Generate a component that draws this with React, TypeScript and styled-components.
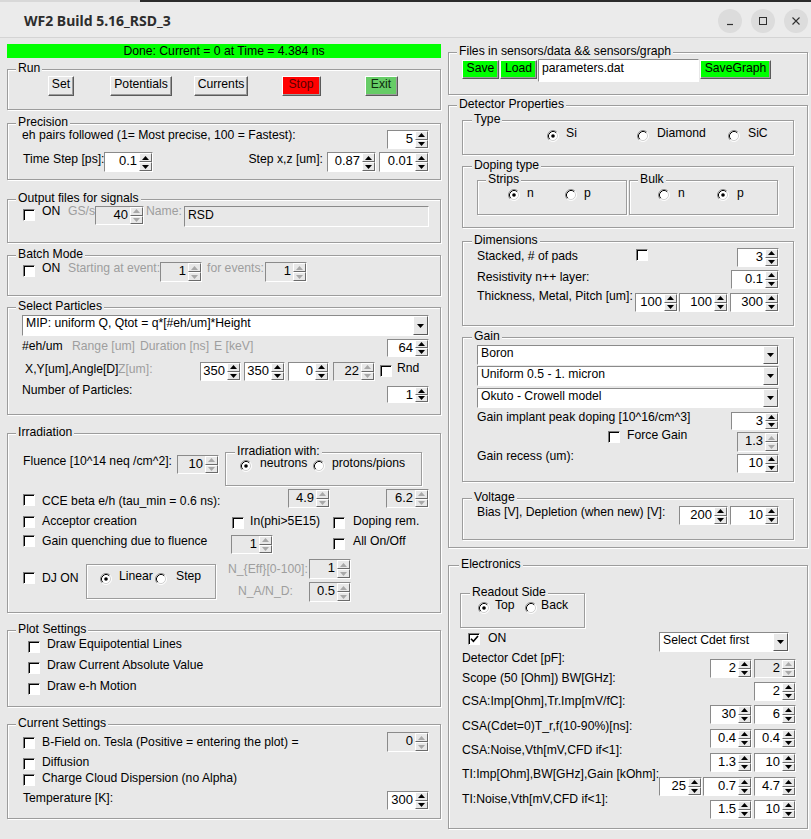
import React from 'react';
import styled, { createGlobalStyle } from 'styled-components';

const GlobalStyle = createGlobalStyle`
  html, body {
    margin: 0;
    padding: 0;
    background: #e8e8e8;
  }
`;

type Off = number | 'auto' | undefined;
const px = (v: Off) => (v === 'auto' ? 'auto' : `${v ?? 0}px`);

const App = () => {
  return (
    <>
      <GlobalStyle />
      <Window>
        <TitleBar>
          <WinTitle>WF2 Build 5.16_RSD_3</WinTitle>
          <WinControls>
            <WinBtn>
              <svg width="10" height="10" viewBox="0 0 10 10">
                <path d="M2 8.5H8" stroke="#2f2f2f" strokeWidth="1.2" />
              </svg>
            </WinBtn>
            <WinBtn>
              <svg width="10" height="10" viewBox="0 0 10 10">
                <rect x="1.5" y="1.5" width="7" height="7" fill="none" stroke="#2f2f2f" />
              </svg>
            </WinBtn>
            <WinBtn>
              <svg width="10" height="10" viewBox="0 0 10 10">
                <path d="M1.5 1.5L8.5 8.5M8.5 1.5L1.5 8.5" stroke="#2f2f2f" strokeWidth="1.1" />
              </svg>
            </WinBtn>
          </WinControls>
        </TitleBar>

        <Body>
          <LeftCol>
            <StatusBar>Done: Current = 0 at Time = 4.384 ns</StatusBar>

            <Frame $h={41} $mt={11}>
              <Legend>Run</Legend>
              <ButtonGrid>
                <Btn>Set</Btn>
                <Btn>Potentials</Btn>
                <Btn>Currents</Btn>
                <Btn $bg="#ff0000" $fg="#5a0000" $w={39}>Stop</Btn>
                <Btn $bg="#66cc66" $fg="#0d2a0d" $w={33}>Exit</Btn>
              </ButtonGrid>
            </Frame>

            <Frame $h={57} $mt={13}>
              <Legend>Precision</Legend>
              <Row $mt={6} $h={19} $pl={14} $pr={11}>
                <Text $mt={-2}>eh pairs followed (1= Most precise, 100 = Fastest):</Text>
                <Spin v="5" w={42} ml="auto" />
              </Row>
              <Row $mt={3} $h={20} $pl={15} $pr={11}>
                <Text $w={81}>Time Step [ps]:</Text>
                <Spin v="0.1" w={49} h={20} />
                <Text $ml="auto">Step x,z [um]:</Text>
                <Spin v="0.87" w={49} h={20} ml={4} />
                <Spin v="0.01" w={50} h={20} ml={3} />
              </Row>
            </Frame>

            <Frame $h={44} $mt={19}>
              <Legend>Output files for signals</Legend>
              <Row $mt={6} $h={21} $pl={15}>
                <Check mt={3} />
                <Text $ml={7} $w={26} $mt={-2}>ON</Text>
                <Text $dim $w={27} $mt={-2}>GS/s</Text>
                <Spin v="40" w={49} off />
                <Text $dim $ml={2} $w={38} $mt={-2}>Name:</Text>
                <Field $w={245} $h={21} $off>RSD</Field>
              </Row>
            </Frame>

            <Frame $h={41} $mt={12}>
              <Legend>Batch Mode</Legend>
              <Row $mt={6} $h={20} $pl={15}>
                <Check mt={3} />
                <Text $ml={7} $w={26} $mt={-1}>ON</Text>
                <Text $dim $w={92} $mt={-1}>Starting at event:</Text>
                <Spin v="1" w={42} h={20} off />
                <Text $dim $ml={5} $w={58} $mt={-1}>for events:</Text>
                <Spin v="1" w={42} h={20} off />
              </Row>
            </Frame>

            <Frame $h={108} $mt={11}>
              <Legend>Select Particles</Legend>
              <Row $mt={7} $h={21} $pl={14} $pr={11}>
                <Combo text="MIP: uniform Q, Qtot = q*[#eh/um]*Height" h={21} />
              </Row>
              <Row $mt={3} $h={18} $pl={14} $pr={11}>
                <Text $w={50}>#eh/um</Text>
                <Text $dim $w={68}>Range [um]</Text>
                <Text $dim $w={74}>Duration [ns]</Text>
                <Text $dim>E [keV]</Text>
                <Spin v="64" w={42} h={18} ml="auto" />
              </Row>
              <Row $mt={5} $h={19} $pl={17}>
                <Text $w={93}>X,Y[um],Angle[D]</Text>
                <Text $dim $w={82}>Z[um]:</Text>
                <Spin v="350" w={41} />
                <Spin v="350" w={41} ml={3} />
                <Spin v="0" w={41} ml={3} />
                <Spin v="22" w={42} ml={4} off />
                <Check ml={5} mt={3} />
                <Text $ml={5} $mt={-1}>Rnd</Text>
              </Row>
              <Row $h={24} $pl={14} $pr={11}>
                <Text $mt={2}>Number of Particles:</Text>
                <Spin v="1" w={42} h={17} ml="auto" mt={5} />
              </Row>
            </Frame>

            <Frame $h={180} $mt={18}>
              <Legend>Irradiation</Legend>
              <Row $mt={18} $h={34} $pl={15}>
                <Text $mt={2} $w={154}>Fluence [10^14 neq /cm^2]:</Text>
                <Spin v="10" w={42} mt={3} off />
                <Frame $w={197} $h={34} $ml={6}>
                  <Legend $x={9}>Irradiation with:</Legend>
                  <Row $mt={7} $h={12} $pl={14}>
                    <Radio on />
                    <Text $ml={8} $mt={-3} $w={53} $lh={12}>neutrons</Text>
                    <Radio />
                    <Text $ml={7} $mt={-3} $lh={12}>protons/pions</Text>
                  </Row>
                </Frame>
              </Row>
              <Row $mt={3} $h={19} $pl={15} $pr={11}>
                <Check mt={5} />
                <Text $ml={7} $mt={5} $w={246}>CCE beta e/h (tau_min = 0.6 ns):</Text>
                <Spin v="4.9" w={42} off />
                <Spin v="6.2" w={43} ml="auto" off />
              </Row>
              <Row $mt={6} $h={20} $pl={15}>
                <Check mt={2} />
                <Text $ml={7} $w={190}>Acceptor creation</Text>
                <Check mt={3} />
                <Text $ml={6} $w={83}>In(phi&gt;5E15)</Text>
                <Check mt={3} />
                <Text $ml={8}>Doping rem.</Text>
              </Row>
              <Row $h={21} $pl={15}>
                <Check mt={1} />
                <Text $ml={7} $w={189}>Gain quenching due to fluence</Text>
                <Spin v="1" w={42} mt={1} off />
                <Check ml={60} mt={4} />
                <Text $ml={8}>All On/Off</Text>
              </Row>
              <Row $h={48} $pl={15}>
                <Check mt={17} />
                <Text $ml={7} $mt={16} $w={44}>DJ ON</Text>
                <Frame $w={130} $h={35} $mt={9}>
                  <Row $mt={8} $h={12} $pl={13}>
                    <Radio on />
                    <Text $ml={7} $mt={-4} $w={36}>Linear</Text>
                    <Radio />
                    <Text $ml={9} $mt={-4}>Step</Text>
                  </Row>
                </Frame>
                <Stack $ml={12}>
                  <Row $mt={4} $h={20}>
                    <Text $dim $mt={3} $w={81}>N_{'{'}Eff{'}'}[0-100]:</Text>
                    <Spin v="1" w={42} h={20} off />
                  </Row>
                  <Row $mt={3} $h={20} $pl={10}>
                    <Text $dim $mt={2} $w={71}>N_A/N_D:</Text>
                    <Spin v="0.5" w={42} h={20} off />
                  </Row>
                </Stack>
              </Row>
            </Frame>

            <Frame $h={77} $mt={17}>
              <Legend>Plot Settings</Legend>
              <Row $mt={6} $h={21} $pl={20}>
                <Check mt={4} />
                <Text $ml={7}>Draw Equipotential Lines</Text>
              </Row>
              <Row $h={21} $pl={20}>
                <Check mt={4} />
                <Text $ml={7}>Draw Current Absolute Value</Text>
              </Row>
              <Row $h={21} $pl={20}>
                <Check mt={4} />
                <Text $ml={7}>Draw e-h Motion</Text>
              </Row>
            </Frame>

            <Frame $h={95} $mt={17}>
              <Legend>Current Settings</Legend>
              <Row $mt={7} $h={20} $pl={15} $pr={11}>
                <Check mt={5} />
                <Text $ml={7} $mt={3}>B-Field on. Tesla (Positive = entering the plot) =</Text>
                <Spin v="0" w={42} h={20} ml="auto" off />
              </Row>
              <Row $mt={3} $h={16} $pl={15}>
                <Check mt={3} />
                <Text $ml={7}>Diffusion</Text>
              </Row>
              <Row $h={16} $pl={15}>
                <Check mt={3} />
                <Text $ml={7}>Charge Cloud Dispersion (no Alpha)</Text>
              </Row>
              <Row $mt={2} $h={21} $pl={15} $pr={11}>
                <Text $mt={2}>Temperature [K]:</Text>
                <Spin v="300" w={42} ml="auto" mt={2} />
              </Row>
            </Frame>
          </LeftCol>

          <RightCol>
            <Frame $h={43} $mt={8}>
              <Legend>Files in sensors/data &amp;&amp; sensors/graph</Legend>
              <Row $mt={6} $h={23} $pl={13}>
                <Btn $bg="#00ff00" $w={37} $h={19} $mt={1}>Save</Btn>
                <Btn $bg="#00ff00" $w={37} $h={19} $mt={1} $ml={1}>Load</Btn>
                <Field $w={161} $h={23} $ml={1}>parameters.dat</Field>
                <Btn $bg="#00ff00" $w={71} $h={19} $mt={1} $ml={1}>SaveGraph</Btn>
              </Row>
            </Frame>

            <Frame $h={443} $mt={10}>
              <Legend>Detector Properties</Legend>

              <Frame $w={332} $h={35} $ml={13} $mt={14}>
                <Legend $x={9}>Type</Legend>
                <Row $mt={9} $h={12} $pl={84}>
                  <Radio on />
                  <Text $ml={7} $mt={-4} $w={71}>Si</Text>
                  <Radio />
                  <Text $ml={8} $mt={-4} $w={71}>Diamond</Text>
                  <Radio />
                  <Text $ml={8} $mt={-4}>SiC</Text>
                </Row>
              </Frame>

              <Frame $w={332} $h={62} $ml={13} $mt={11}>
                <Legend $x={9}>Doping type</Legend>
                <Row $mt={13} $h={35} $pl={14}>
                  <Frame $w={150} $h={35}>
                    <Legend>Strips</Legend>
                    <Row $mt={8} $h={12} $pl={30}>
                      <Radio on />
                      <Text $ml={7} $mt={-3} $w={38}>n</Text>
                      <Radio />
                      <Text $ml={7} $mt={-3}>p</Text>
                    </Row>
                  </Frame>
                  <Frame $w={149} $h={35} $ml={2}>
                    <Legend>Bulk</Legend>
                    <Row $mt={8} $h={12} $pl={28}>
                      <Radio />
                      <Text $ml={8} $mt={-3} $w={39}>n</Text>
                      <Radio on />
                      <Text $ml={8} $mt={-3}>p</Text>
                    </Row>
                  </Frame>
                </Row>
              </Frame>

              <Frame $w={332} $h={85} $ml={13} $mt={13}>
                <Legend $x={9}>Dimensions</Legend>
                <Row $mt={6} $h={19} $pl={14} $pr={14}>
                  <Text $mt={1} $w={159}>Stacked, # of pads</Text>
                  <Check mt={1} />
                  <Spin v="3" w={42} ml="auto" />
                </Row>
                <Row $mt={3} $h={19} $pl={14} $pr={14}>
                  <Text>Resistivity n++ layer:</Text>
                  <Spin v="0.1" w={48} ml="auto" />
                </Row>
                <Row $h={23} $pl={14}>
                  <Text $w={158}>Thickness, Metal, Pitch [um]:</Text>
                  <Spin v="100" w={43} mt={4} />
                  <Spin v="100" w={49} mt={4} ml={1} />
                  <Spin v="300" w={49} mt={4} ml={2} />
                </Row>
              </Frame>

              <Frame $w={332} $h={145} $ml={13} $mt={11}>
                <Legend $x={9}>Gain</Legend>
                <Row $mt={7} $h={20} $pl={14} $pr={14}>
                  <Combo text="Boron" h={20} />
                </Row>
                <Row $mt={1} $h={20} $pl={14} $pr={14}>
                  <Combo text="Uniform 0.5 - 1. micron" h={20} />
                </Row>
                <Row $mt={2} $h={20} $pl={14} $pr={14}>
                  <Combo text="Okuto - Crowell model" h={20} />
                </Row>
                <Row $mt={2} $h={20} $pl={14} $pr={14}>
                  <Text>Gain implant peak doping [10^16/cm^3]</Text>
                  <Spin v="3" w={48} h={18} ml="auto" mt={2} />
                </Row>
                <Row $h={22} $pl={14} $pr={14}>
                  <Check ml={131} mt={1} />
                  <Text $ml={7} $mt={-2}>Force Gain</Text>
                  <Spin v="1.3" w={42} h={20} ml="auto" mt={2} off />
                </Row>
                <Row $h={21} $pl={14} $pr={14}>
                  <Text $mt={-3}>Gain recess (um):</Text>
                  <Spin v="10" w={42} ml="auto" mt={2} />
                </Row>
              </Frame>

              <Frame $w={332} $h={42} $ml={13} $mt={16}>
                <Legend $x={9}>Voltage</Legend>
                <Row $mt={6} $h={21} $pl={14}>
                  <Text $w={202}>Bias [V], Depletion (when new) [V]:</Text>
                  <Spin v="200" w={49} mt={1} />
                  <Spin v="10" w={49} mt={1} ml={2} />
                </Row>
              </Frame>
            </Frame>

            <Frame $h={264} $mt={17}>
              <Legend $x={10}>Electronics</Legend>
              <Frame $w={125} $h={35} $ml={11} $mt={27}>
                <Legend $x={9}>Readout Side</Legend>
                <Row $mt={8} $h={12} $pl={17}>
                  <Radio on />
                  <Text $ml={5} $mt={-4} $w={30}>Top</Text>
                  <Radio />
                  <Text $ml={4} $mt={-4}>Back</Text>
                </Row>
              </Frame>
              <Row $mt={3} $h={21} $pl={19} $pr={18}>
                <Check on mt={2} />
                <Text $ml={8}>ON</Text>
                <Combo text="Select Cdet first" w={130} h={20} ml="auto" mt={1} />
              </Row>
              <ElecGrid>
                <Stack>
                  <Text $mt={-1}>Detector Cdet [pF]:</Text>
                  <Text $mt={6}>Scope (50 [Ohm]) BW[GHz]:</Text>
                  <Text $mt={9}>CSA:Imp[Ohm],Tr.Imp[mV/fC]:</Text>
                  <Text $mt={11}>CSA(Cdet=0)T_r,f(10-90%)[ns]:</Text>
                  <Text $mt={10}>CSA:Noise,Vth[mV,CFD if&lt;1]:</Text>
                  <Text $mt={10}>TI:Imp[Ohm],BW[GHz],Gain [kOhm]:</Text>
                  <Text $mt={11}>TI:Noise,Vth[mV,CFD if&lt;1]:</Text>
                </Stack>
                <SpinStack>
                  <Row $mt={7} $h={19}>
                    <Spin v="2" w={42} />
                    <Spin v="2" w={42} ml={2} off />
                  </Row>
                  <Row $mt={4} $h={19}>
                    <Spin v="2" w={42} />
                  </Row>
                  <Row $mt={4} $h={19}>
                    <Spin v="30" w={42} />
                    <Spin v="6" w={42} ml={2} />
                  </Row>
                  <Row $mt={5} $h={19}>
                    <Spin v="0.4" w={42} />
                    <Spin v="0.4" w={42} ml={2} />
                  </Row>
                  <Row $mt={5} $h={19}>
                    <Spin v="1.3" w={42} />
                    <Spin v="10" w={42} ml={2} />
                  </Row>
                  <Row $mt={5} $h={19}>
                    <Spin v="25" w={43} />
                    <Spin v="0.7" w={49} ml={1} />
                    <Spin v="4.7" w={42} ml={2} />
                  </Row>
                  <Row $mt={4} $h={19}>
                    <Spin v="1.5" w={42} />
                    <Spin v="10" w={42} ml={2} />
                  </Row>
                </SpinStack>
              </ElecGrid>
            </Frame>
          </RightCol>
        </Body>
      </Window>
    </>
  );
};

// Small widgets

const Tri = ({ down, off }: { down?: boolean; off?: boolean }) => (
  <svg width="7" height="4" viewBox="0 0 7 4">
    <path d={down ? 'M0 0H7L3.5 4Z' : 'M0 4H7L3.5 0Z'} fill={off ? '#a8a8a8' : '#000'} />
  </svg>
);

type SpinProps = { v: string; w: number; h?: number; ml?: Off; mt?: number; off?: boolean };

const Spin = ({ v, w, h = 19, ml, mt, off }: SpinProps) => (
  <SpinBox $w={w} $h={h} $ml={ml} $mt={mt}>
    <SpinValue $off={off}>{v}</SpinValue>
    <SpinArrows>
      <ArrowBtn>
        <Tri off={off} />
      </ArrowBtn>
      <ArrowBtn>
        <Tri down off={off} />
      </ArrowBtn>
    </SpinArrows>
  </SpinBox>
);

const Check = ({ on, ml, mt }: { on?: boolean; ml?: number; mt?: number }) => (
  <CheckBox $ml={ml} $mt={mt}>
    {on && (
      <svg width="9" height="8" viewBox="0 0 9 8">
        <path d="M1 3.8L3.4 6.3L8 1" fill="none" stroke="#000" strokeWidth="1.6" />
      </svg>
    )}
  </CheckBox>
);

const Radio = ({ on, ml, mt }: { on?: boolean; ml?: number; mt?: number }) => (
  <RadioWrap $ml={ml} $mt={mt}>
    <svg width="12" height="12" viewBox="0 0 12 12">
      <circle cx="6" cy="6" r="5" fill="#fff" />
      <path d="M2.11 9.89A5.5 5.5 0 0 1 9.89 2.11" stroke="#8a8a8a" fill="none" />
      <path d="M2.82 9.18A4.5 4.5 0 0 1 9.18 2.82" stroke="#000" fill="none" />
      <path d="M9.89 2.11A5.5 5.5 0 0 1 2.11 9.89" stroke="#fff" fill="none" />
      <path d="M9.18 2.82A4.5 4.5 0 0 1 2.82 9.18" stroke="#d2d2d2" fill="none" />
      {on && <circle cx="6" cy="6" r="1.8" fill="#000" />}
    </svg>
  </RadioWrap>
);

const Combo = ({ text, w, h, ml, mt }: { text: string; w?: number; h: number; ml?: Off; mt?: number }) => (
  <ComboBox $w={w} $h={h} $ml={ml} $mt={mt}>
    <ComboText>{text}</ComboText>
    <ComboArrow>
      <Tri down />
    </ComboArrow>
  </ComboBox>
);

// Styled Components
const Window = styled.div`
  width: 811px;
  height: 839px;
  overflow: hidden;
  background: #e8e8e8;
  color: #000;
  font-family: "Liberation Sans", Arial, sans-serif;
  font-size: 12.2px;
`;

const TitleBar = styled.header`
  display: flex;
  align-items: center;
  box-sizing: border-box;
  height: 38px;
  padding: 4px 3px 0 24px;
  border-bottom: 1px solid #d4d4d4;
  background:
    linear-gradient(to right, #d8d8d8 140px, #2b2b2b 140px) top left / 100% 2px no-repeat,
    #ebebeb;
`;

const WinTitle = styled.div`
  font-family: "Noto Sans", "Liberation Sans", sans-serif;
  font-weight: 700;
  font-size: 14px;
  color: #2d2d2d;
`;

const WinControls = styled.div`
  display: flex;
  gap: 9px;
  margin-left: auto;
`;

const WinBtn = styled.div`
  display: flex;
  align-items: center;
  justify-content: center;
  width: 24px;
  height: 24px;
  border-radius: 50%;
  background: #dcdcdc;
`;

const Body = styled.div`
  display: flex;
  padding: 6px 0 0 7px;
`;

const LeftCol = styled.div`
  display: flex;
  flex-direction: column;
  flex: none;
  width: 434px;
`;

const RightCol = styled.div`
  display: flex;
  flex-direction: column;
  flex: none;
  width: 360px;
  margin-left: 7px;
`;

const StatusBar = styled.div`
  height: 14px;
  line-height: 14px;
  text-align: center;
  background: #00ff00;
`;

const Frame = styled.div<{ $w?: number; $h: number; $mt?: number; $ml?: number }>`
  position: relative;
  display: flex;
  flex-direction: column;
  flex: none;
  box-sizing: border-box;
  width: ${(p) => (p.$w ? `${p.$w}px` : 'auto')};
  height: ${(p) => p.$h}px;
  margin-top: ${(p) => p.$mt ?? 0}px;
  margin-left: ${(p) => p.$ml ?? 0}px;
  border: 1px solid #9c9c9c;
  box-shadow: 1px 1px 0 #fff, inset 1px 1px 0 #fff;
`;

const Legend = styled.span<{ $x?: number }>`
  position: absolute;
  top: -8px;
  left: ${(p) => p.$x ?? 8}px;
  padding: 0 2px;
  line-height: 12px;
  white-space: nowrap;
  background: #e8e8e8;
`;

const Row = styled.div<{ $h: number; $mt?: number; $pl?: number; $pr?: number }>`
  display: flex;
  align-items: flex-start;
  flex: none;
  height: ${(p) => p.$h}px;
  margin-top: ${(p) => p.$mt ?? 0}px;
  padding: 0 ${(p) => p.$pr ?? 0}px 0 ${(p) => p.$pl ?? 0}px;
`;

const Stack = styled.div<{ $ml?: number }>`
  display: flex;
  flex-direction: column;
  flex: none;
  margin-left: ${(p) => p.$ml ?? 0}px;
`;

const ElecGrid = styled.div`
  display: flex;
  padding: 0 14px 0 13px;
`;

const SpinStack = styled.div`
  display: flex;
  flex-direction: column;
  align-items: flex-end;
  flex: 1;
`;

const ButtonGrid = styled.div`
  display: grid;
  grid-template-columns: repeat(5, 80px);
  justify-items: center;
  margin-top: 6px;
  padding-left: 13px;
`;

const Text = styled.span<{ $w?: number; $ml?: Off; $mt?: number; $dim?: boolean; $lh?: number }>`
  display: block;
  flex: none;
  width: ${(p) => (p.$w ? `${p.$w}px` : 'auto')};
  margin-left: ${(p) => px(p.$ml)};
  margin-top: ${(p) => p.$mt ?? 0}px;
  line-height: ${(p) => p.$lh ?? 14}px;
  white-space: nowrap;
  color: ${(p) => (p.$dim ? '#9e9e9e' : '#000')};
`;

const Btn = styled.div<{ $bg?: string; $fg?: string; $w?: number; $h?: number; $ml?: number; $mt?: number }>`
  display: flex;
  justify-content: center;
  flex: none;
  box-sizing: border-box;
  width: ${(p) => (p.$w ? `${p.$w}px` : 'auto')};
  height: ${(p) => p.$h ?? 20}px;
  margin-left: ${(p) => p.$ml ?? 0}px;
  margin-top: ${(p) => p.$mt ?? 0}px;
  padding: 0 3px;
  line-height: 14px;
  white-space: nowrap;
  color: ${(p) => p.$fg ?? '#000'};
  background: ${(p) => p.$bg ?? '#e8e8e8'};
  border: 1px solid;
  border-color: #fff #5a5a5a #5a5a5a #fff;
  box-shadow: inset -1px -1px 0 #9c9c9c;
`;

const SpinBox = styled.div<{ $w: number; $h: number; $ml?: Off; $mt?: number }>`
  display: flex;
  flex: none;
  box-sizing: border-box;
  width: ${(p) => p.$w}px;
  height: ${(p) => p.$h}px;
  margin-left: ${(p) => px(p.$ml)};
  margin-top: ${(p) => p.$mt ?? 0}px;
  border: 1px solid;
  border-color: #8a8a8a #fff #fff #8a8a8a;
`;

const SpinValue = styled.div<{ $off?: boolean }>`
  flex: 1;
  padding-right: 2px;
  text-align: right;
  font-size: 13px;
  line-height: 15px;
  background: ${(p) => (p.$off ? '#e8e8e8' : '#fff')};
`;

const SpinArrows = styled.div`
  display: flex;
  flex-direction: column;
  flex: none;
  width: 13px;
`;

const ArrowBtn = styled.div`
  display: flex;
  align-items: center;
  justify-content: center;
  flex: 1;
  box-sizing: border-box;
  background: #e8e8e8;
  border: 1px solid;
  border-color: #fff #6a6a6a #6a6a6a #fff;
`;

const Field = styled.div<{ $w: number; $h: number; $ml?: number; $off?: boolean }>`
  flex: none;
  box-sizing: border-box;
  width: ${(p) => p.$w}px;
  height: ${(p) => p.$h}px;
  margin-left: ${(p) => p.$ml ?? 0}px;
  padding: 1px 3px 0;
  line-height: 14px;
  white-space: nowrap;
  background: ${(p) => (p.$off ? '#e8e8e8' : '#fff')};
  border: 1px solid;
  border-color: #8a8a8a #fff #fff #8a8a8a;
`;

const CheckBox = styled.div<{ $ml?: number; $mt?: number }>`
  display: flex;
  align-items: center;
  justify-content: center;
  flex: none;
  box-sizing: border-box;
  width: 12px;
  height: 12px;
  margin-left: ${(p) => p.$ml ?? 0}px;
  margin-top: ${(p) => p.$mt ?? 0}px;
  background: #fff;
  border: 1px solid;
  border-color: #7c7c7c #fff #fff #7c7c7c;
  box-shadow: inset 1px 1px 0 #000;
`;

const RadioWrap = styled.span<{ $ml?: number; $mt?: number }>`
  display: block;
  flex: none;
  width: 12px;
  height: 12px;
  margin-left: ${(p) => p.$ml ?? 0}px;
  margin-top: ${(p) => p.$mt ?? 0}px;

  svg {
    display: block;
  }
`;

const ComboBox = styled.div<{ $w?: number; $h: number; $ml?: Off; $mt?: number }>`
  display: flex;
  flex: ${(p) => (p.$w ? 'none' : '1')};
  box-sizing: border-box;
  width: ${(p) => (p.$w ? `${p.$w}px` : 'auto')};
  height: ${(p) => p.$h}px;
  margin-left: ${(p) => px(p.$ml)};
  margin-top: ${(p) => p.$mt ?? 0}px;
  background: #fff;
  border: 1px solid;
  border-color: #8a8a8a #fff #fff #8a8a8a;
`;

const ComboText = styled.div`
  flex: 1;
  padding-left: 3px;
  line-height: 14px;
  white-space: nowrap;
  overflow: hidden;
`;

const ComboArrow = styled.div`
  display: flex;
  align-items: center;
  justify-content: center;
  flex: none;
  box-sizing: border-box;
  width: 15px;
  background: #e8e8e8;
  border: 1px solid;
  border-color: #fff #5a5a5a #5a5a5a #fff;
`;

export default App;
